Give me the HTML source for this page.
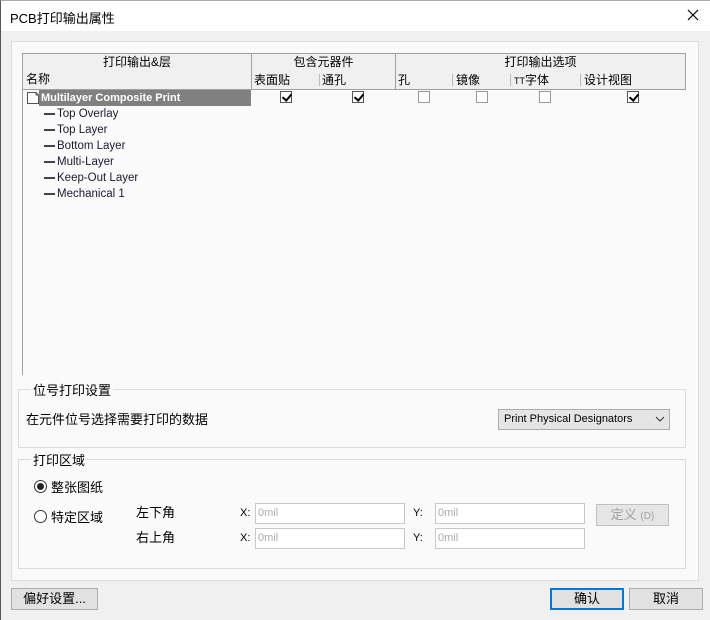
<!DOCTYPE html>
<html><head><meta charset="utf-8"><style>
*{box-sizing:border-box;margin:0;padding:0}
body{width:710px;height:620px;background:#f0f0f0;font-family:"Liberation Sans","Noto Sans CJK SC",sans-serif;font-size:12px;color:#000;position:relative;overflow:hidden}
.a{position:absolute}
.title{left:0;top:0;width:710px;height:31px;background:#fff;border-top:1px solid #aaa;border-left:1px solid #555}
.panel{left:11px;top:41px;width:688px;height:540px;background:#fafafa;border:1px solid #dcdcdc}
.hdr{background:#f0f0f0;border:1px solid #a0a0a0;text-align:center;line-height:17px;font-size:12px}
.cb{width:12px;height:12px;border:1px solid #555;background:#fff}
.cb.c::after{content:"";position:absolute;left:3px;top:0px;width:4px;height:7px;border:solid #000;border-width:0 2px 2px 0;transform:rotate(40deg)}
.cb.e{border-color:#999}
.tr{font-size:11.5px;color:#1a1a2e;left:44px;line-height:14px}
.tr::before{content:"";position:absolute;left:0;top:6px;width:11px;height:2px;background:#444}
.tr span{margin-left:13px}
.grp{border:1px solid #dcdcdc}
.lbl{background:#fafafa;font-size:13px;padding:0 2px}
.inp{height:21px;border:1px solid #c8c8c8;background:#fff;color:#aaa;font-size:11px;line-height:19px;padding-left:2px}
.btn{height:22px;border:1px solid #adadad;background:#e1e1e1;text-align:center;line-height:20px;font-size:13px}
.rad{width:13px;height:13px;border:1px solid #333;border-radius:50%;background:#fff}
</style></head><body>
<div class="a" style="left:0;top:0;width:1px;height:620px;background:#555"></div>
<div class="a title"></div>
<div class="a" style="left:10px;top:8px;font-size:13px">PCB打印输出属性</div>
<svg class="a" style="left:687px;top:9px" width="12" height="12"><path d="M1 1L11 11M11 1L1 11" stroke="#000" stroke-width="1.2"/></svg>
<div class="a panel"></div>
<div class="a hdr" style="left:22px;top:53px;width:230px;height:19px">打印输出&amp;层</div>
<div class="a hdr" style="left:251px;top:53px;width:145px;height:19px">包含元器件</div>
<div class="a hdr" style="left:395px;top:53px;width:291px;height:19px">打印输出选项</div>
<div class="a hdr" style="left:22px;top:71px;width:230px;height:19px;text-align:left;padding-left:3px;border-top:none">名称</div>
<div class="a hdr" style="left:251px;top:71px;width:145px;height:19px;border-top:none"></div>
<div class="a hdr" style="left:395px;top:71px;width:291px;height:19px;border-top:none"></div>
<div class="a" style="left:254px;top:72px;line-height:17px">表面贴</div>
<div class="a" style="left:319px;top:74px;width:1px;height:12px;background:#bbb"></div>
<div class="a" style="left:322px;top:72px;line-height:17px">通孔</div>
<div class="a" style="left:398px;top:72px;line-height:17px">孔</div>
<div class="a" style="left:452px;top:74px;width:1px;height:12px;background:#bbb"></div>
<div class="a" style="left:456px;top:72px;line-height:17px">镜像</div>
<div class="a" style="left:510px;top:74px;width:1px;height:12px;background:#bbb"></div>
<div class="a" style="left:514px;top:72px;line-height:17px"><span style="font-size:9px">TT</span>字体</div>
<div class="a" style="left:580px;top:74px;width:1px;height:12px;background:#bbb"></div>
<div class="a" style="left:584px;top:72px;line-height:17px">设计视图</div>
<div class="a" style="left:22px;top:90px;width:1px;height:285px;background:#a0a0a0"></div>
<svg class="a" style="left:26px;top:91px" width="14" height="14"><path d="M1.5 1.5H10L12.5 4V12.5H1.5Z" fill="#fff" stroke="#555"/><path d="M10 1.5V4H12.5" fill="none" stroke="#555"/></svg>
<div class="a" style="left:39px;top:90px;width:212px;height:16px;background:#808080;color:#fff;font-size:11px;font-weight:bold;line-height:16px;padding-left:2px">Multilayer Composite Print</div>
<div class="a cb c" style="left:280px;top:91px"></div>
<div class="a cb c" style="left:352px;top:91px"></div>
<div class="a cb e" style="left:418px;top:91px"></div>
<div class="a cb e" style="left:476px;top:91px"></div>
<div class="a cb e" style="left:539px;top:91px"></div>
<div class="a cb c" style="left:627px;top:91px"></div>
<div class="a tr" style="top:107px"><span>Top Overlay</span></div>
<div class="a tr" style="top:123px"><span>Top Layer</span></div>
<div class="a tr" style="top:139px"><span>Bottom Layer</span></div>
<div class="a tr" style="top:155px"><span>Multi-Layer</span></div>
<div class="a tr" style="top:171px"><span>Keep-Out Layer</span></div>
<div class="a tr" style="top:187px"><span>Mechanical 1</span></div>
<div class="a grp" style="left:18px;top:389px;width:668px;height:59px"></div>
<div class="a lbl" style="left:31px;top:380px">位号打印设置</div>
<div class="a" style="left:26px;top:409px;font-size:13px">在元件位号选择需要打印的数据</div>
<div class="a" style="left:498px;top:409px;width:172px;height:21px;border:1px solid #adadad;background:#e5e5e5;font-size:11px;line-height:19px;padding-left:5px">Print Physical Designators</div>
<svg class="a" style="left:655px;top:416px" width="10" height="6"><path d="M1 1L5 5L9 1" fill="none" stroke="#333"/></svg>
<div class="a grp" style="left:18px;top:459px;width:668px;height:110px"></div>
<div class="a lbl" style="left:31px;top:450px">打印区域</div>
<div class="a rad" style="left:34px;top:480px"></div>
<div class="a" style="left:37px;top:483px;width:7px;height:7px;border-radius:50%;background:#222"></div>
<div class="a" style="left:51px;top:477px;font-size:13px">整张图纸</div>
<div class="a rad" style="left:34px;top:510px"></div>
<div class="a" style="left:51px;top:507px;font-size:13px">特定区域</div>
<div class="a" style="left:136px;top:502px;font-size:13px">左下角</div>
<div class="a" style="left:136px;top:527px;font-size:13px">右上角</div>
<div class="a" style="left:240px;top:507px;font-size:11px">X:</div>
<div class="a" style="left:240px;top:532px;font-size:11px">X:</div>
<div class="a" style="left:413px;top:507px;font-size:11px">Y:</div>
<div class="a" style="left:413px;top:532px;font-size:11px">Y:</div>
<div class="a inp" style="left:255px;top:503px;width:150px">0mil</div>
<div class="a inp" style="left:255px;top:528px;width:150px">0mil</div>
<div class="a inp" style="left:435px;top:503px;width:150px">0mil</div>
<div class="a inp" style="left:435px;top:528px;width:150px">0mil</div>
<div class="a btn" style="left:596px;top:504px;width:73px;color:#a0a0a0;border-color:#c0c0c0;background:#e6e6e6">定义 <span style="font-size:10px">(D)</span></div>
<div class="a btn" style="left:11px;top:588px;width:87px">偏好设置...</div>
<div class="a btn" style="left:550px;top:588px;width:74px;border:2px solid #0078d7;line-height:18px">确认</div>
<div class="a btn" style="left:629px;top:588px;width:74px">取消</div>
</body></html>
